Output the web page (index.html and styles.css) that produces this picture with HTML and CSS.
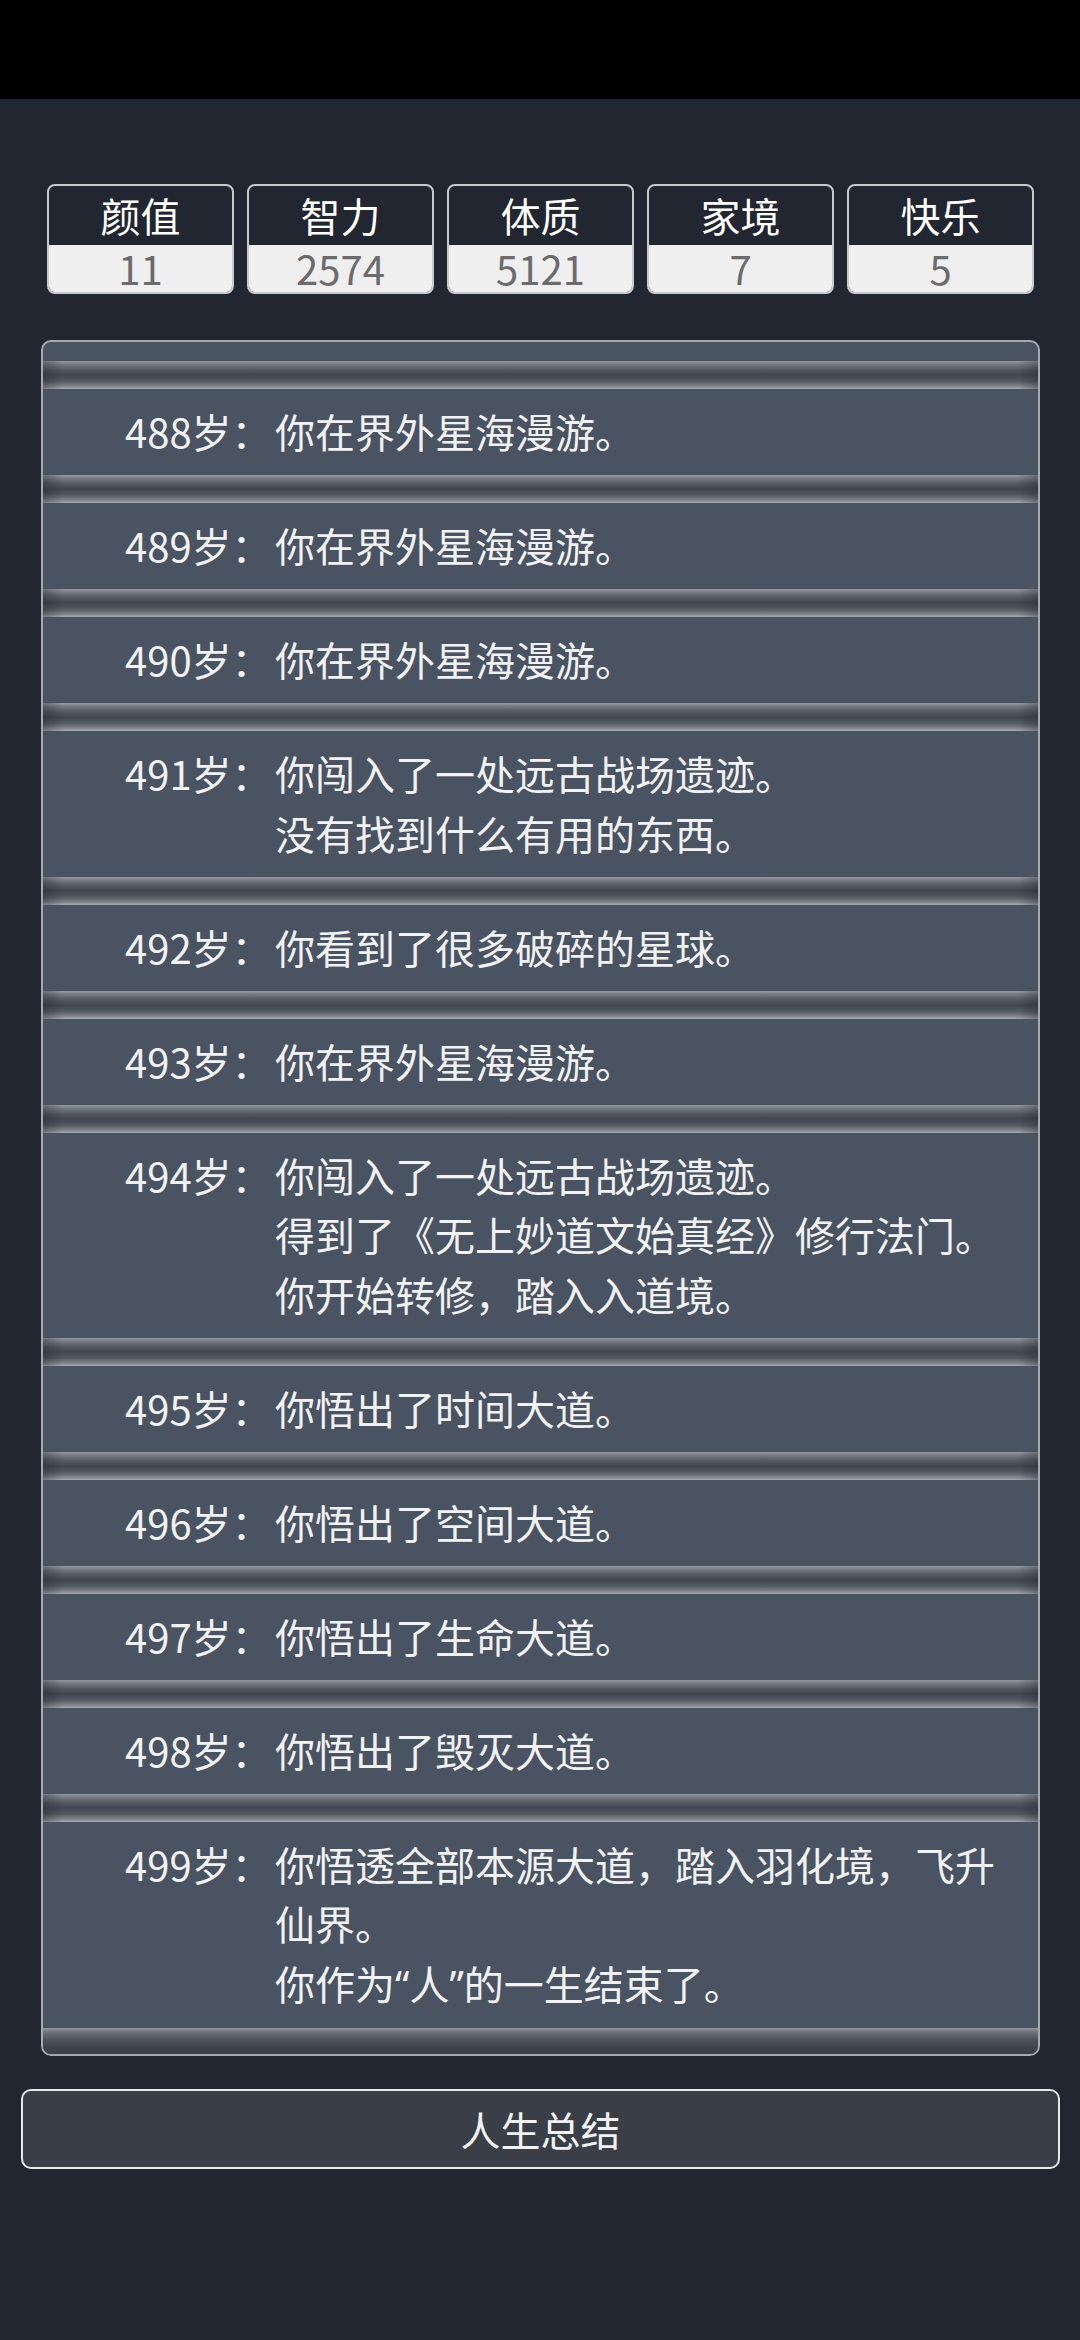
FILE: index.html
```html
<!DOCTYPE html>
<html lang="zh-CN">
<head>
  <meta charset="UTF-8" />
  <meta name="viewport" content="width=device-width, initial-scale=1.0" />
  <title>人生重开模拟器</title>
  <link rel="stylesheet" href="styles.css">
</head>
<body>
  <div class="status-bar"></div>

  <div class="stats">
    <div class="stat"><div class="stat-name">颜值</div><div class="stat-value">11</div></div>
    <div class="stat"><div class="stat-name">智力</div><div class="stat-value">2574</div></div>
    <div class="stat"><div class="stat-name">体质</div><div class="stat-value">5121</div></div>
    <div class="stat"><div class="stat-name">家境</div><div class="stat-value">7</div></div>
    <div class="stat"><div class="stat-name">快乐</div><div class="stat-value">5</div></div>
  </div>

  <ul class="log">
    <li class="entry"><span class="age">488岁：</span><span class="text">你在界外星海漫游。</span></li>
    <li class="entry"><span class="age">489岁：</span><span class="text">你在界外星海漫游。</span></li>
    <li class="entry"><span class="age">490岁：</span><span class="text">你在界外星海漫游。</span></li>
    <li class="entry"><span class="age">491岁：</span><span class="text">你闯入了一处远古战场遗迹。<br>没有找到什么有用的东西。</span></li>
    <li class="entry"><span class="age">492岁：</span><span class="text">你看到了很多破碎的星球。</span></li>
    <li class="entry"><span class="age">493岁：</span><span class="text">你在界外星海漫游。</span></li>
    <li class="entry"><span class="age">494岁：</span><span class="text">你闯入了一处远古战场遗迹。<br>得到了《无上妙道文始真经》修行法门。<br>你开始转修，踏入入道境。</span></li>
    <li class="entry"><span class="age">495岁：</span><span class="text">你悟出了时间大道。</span></li>
    <li class="entry"><span class="age">496岁：</span><span class="text">你悟出了空间大道。</span></li>
    <li class="entry"><span class="age">497岁：</span><span class="text">你悟出了生命大道。</span></li>
    <li class="entry"><span class="age">498岁：</span><span class="text">你悟出了毁灭大道。</span></li>
    <li class="entry"><span class="age">499岁：</span><span class="text">你悟透全部本源大道，踏入羽化境，飞升仙界。<br>你作为<span class="quote">“</span>人<span class="quote">”</span>的一生结束了。</span></li>
  </ul>

  <button class="summary">人生总结</button>
</body>
</html>
```

FILE: styles.css
```css
* {
  box-sizing: border-box;
}
body {
  margin: 0;
  font-family: "Noto Sans CJK SC", "Noto Sans", sans-serif;
  background: #212630;
  color: #f1f2f4;
}
.status-bar {
  height: 99px;
  background: #000;
}

/* attribute boxes */
.stats {
  display: flex;
  gap: 13px;
  padding: 85px 46px 0 47px;
}
.stat {
  flex: 1;
  border: 2px solid #c6c9ce;
  border-radius: 8px;
  text-align: center;
  font-size: 40px;
}
.stat-name {
  height: 59px;
  line-height: 59px;
  color: #fff;
}
.stat-value {
  height: 47px;
  line-height: 46px;
  background: #efefef;
  color: #6b6b6b;
  border-radius: 0 0 6px 6px;
}

/* life log */
.log {
  list-style: none;
  margin: 46px 40px 0 41px;
  padding: 19px 0 0;
  background: #4a5362;
  border: 2px solid #a5a9b0;
  border-radius: 10px;
  overflow: hidden;
}
.entry {
  display: flex;
  padding: 41px 28px 13.5px 82px;
  font-size: 40px;
  line-height: 59.5px;
  background:
    linear-gradient(to right, rgba(30, 33, 40, 0.35), rgba(30, 33, 40, 0) 2%, rgba(30, 33, 40, 0) 98%, rgba(30, 33, 40, 0.35)) top / 100% 28px no-repeat,
    linear-gradient(#959aa1, #767b83 12%, #565a62 30%, #42464e 50%, #555961 72%, #80858c 90%, #a6aab1) top / 100% 28px no-repeat;
}
.age {
  flex: none;
  width: 150px;
}
.text {
  flex: 1;
}
.quote {
  font-family: "Noto Sans", sans-serif;
}
.log::after {
  content: "";
  display: block;
  height: 26px;
  background: linear-gradient(#93979e, #6f737b 15%, #4e525a 45%, #41444c 75%, #3c3f47);
}

.summary {
  display: block;
  width: calc(100% - 41px);
  height: 80px;
  margin: 33px 20px 0 21px;
  background: #3a3e47;
  border: 2px solid #e6e8eb;
  border-radius: 10px;
  color: #f1f2f4;
  font-family: inherit;
  font-size: 40px;
}
```
